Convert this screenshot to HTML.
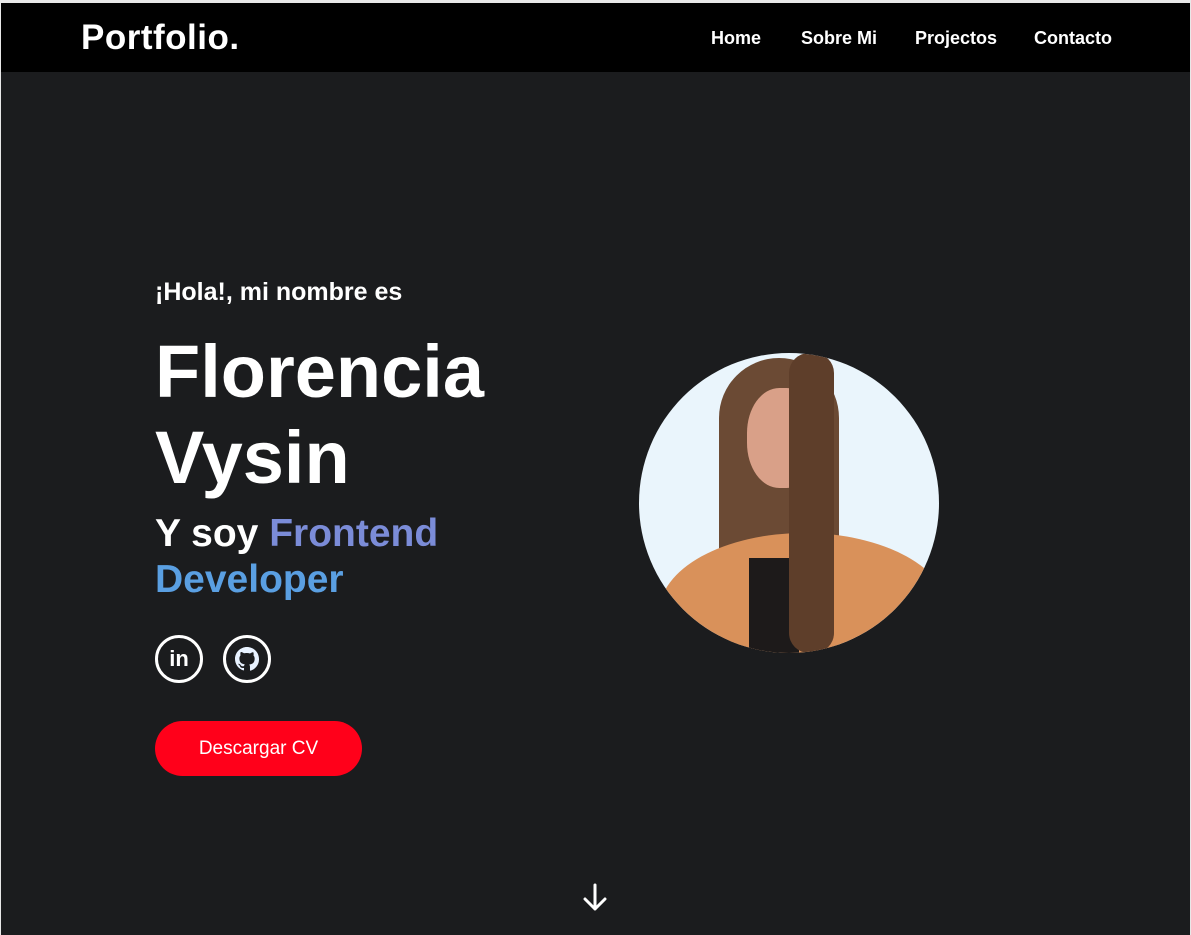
<!DOCTYPE html>
<html><head><meta charset="utf-8"><style>
*{margin:0;padding:0;box-sizing:border-box}
html,body{width:1191px;height:935px;overflow:hidden;background:#e8e8e8;font-family:"Liberation Sans",sans-serif}
.page{position:absolute;left:1px;top:3px;width:1189px;height:932px;background:#1b1c1e}
nav{position:absolute;left:0;top:0;width:1189px;height:69px;background:#000}
.logo{position:absolute;left:80px;top:15px;color:#fff;font-size:35px;font-weight:bold;letter-spacing:0.5px}
.links a{position:absolute;top:25px;color:#fff;font-size:18px;font-weight:bold;text-decoration:none}
.t{position:absolute;color:#fff;font-weight:bold}
.circ{position:absolute;width:48px;height:48px;border:3px solid #fff;border-radius:50%;display:flex;align-items:center;justify-content:center}
.btn{position:absolute;left:154px;top:718px;width:207px;height:55px;border-radius:28px;background:#ff001a;color:#fff;font-size:19px;display:flex;align-items:center;justify-content:center}
.photo{position:absolute;left:638px;top:350px;width:300px;height:300px;border-radius:50%;overflow:hidden;background:#eaf5fc}
</style></head><body>
<div class="page">
<nav><div class="logo">Portfolio.</div>
<div class="links"><a style="left:710px">Home</a><a style="left:800px">Sobre Mi</a><a style="left:914px">Projectos</a><a style="left:1033px">Contacto</a></div></nav>
<div class="t" style="left:154px;top:275px;font-size:25px">¡Hola!, mi nombre es</div>
<div class="t" style="left:154px;top:326px;font-size:74px;line-height:86px">Florencia<br>Vysin</div>
<div class="t" style="left:154px;top:508px;font-size:39px;line-height:46px">Y soy <span style="color:#7b8cd8">Frontend</span><br><span style="color:#5a9fe2">Developer</span></div>
<div class="circ" style="left:154px;top:632px"><span style="color:#fff;font-weight:bold;font-size:22px">in</span></div>
<div class="circ" style="left:222px;top:632px"><svg width="24" height="24" viewBox="0 0 16 16"><path fill="#e8f2ff" d="M8 0C3.58 0 0 3.58 0 8c0 3.540 2.29 6.53 5.47 7.59.4.07.55-.17.55-.38v-1.33c-2.23.48-2.7-1.07-2.7-1.07-.36-.92-.89-1.170-.89-1.17-.73-.5.06-.49.06-.49.8.06 1.23.83 1.23.83.71 1.22 1.87.87 2.33.66.07-.52.28-.87.51-1.07-1.78-.2-3.64-.89-3.64-3.95 0-.87.31-1.59.82-2.15-.08-.2-.36-1.02.08-2.12 0 0 .67-.21 2.2.82A7.7 7.7 0 0 1 8 4.04c.68 0 1.36.09 2 .27 1.53-1.04 2.2-.82 2.2-.82.44 1.1.16 1.92.08 2.12.51.56.82 1.27.82 2.15 0 3.07-1.87 3.75-3.65 3.95.29.25.54.73.54 1.48v2.2c0 .21.15.46.55.38A8 8 0 0 0 16 8c0-4.42-3.58-8-8-8z"/></svg></div>
<div class="btn">Descargar CV</div>
<div class="photo">
<div style="position:absolute;left:80px;top:5px;width:120px;height:300px;background:#6b4a34;border-radius:60px 60px 0 0"></div>
<div style="position:absolute;left:20px;top:180px;width:290px;height:160px;background:#d9915a;border-radius:50% 50% 0 0"></div>
<div style="position:absolute;left:110px;top:205px;width:50px;height:100px;background:#1d1a1a"></div>
<div style="position:absolute;left:108px;top:35px;width:72px;height:100px;background:#d9a088;border-radius:45%"></div>
<div style="position:absolute;left:150px;top:0;width:45px;height:300px;background:#5e3e2a;border-radius:20px"></div>
</div>
<svg style="position:absolute;left:581px;top:880px" width="26" height="30" viewBox="0 0 26 30"><path d="M13 2v24M3 16l10 10 10-10" stroke="#fff" stroke-width="3" fill="none" stroke-linecap="round" stroke-linejoin="round"/></svg>
</div>
</body></html>
